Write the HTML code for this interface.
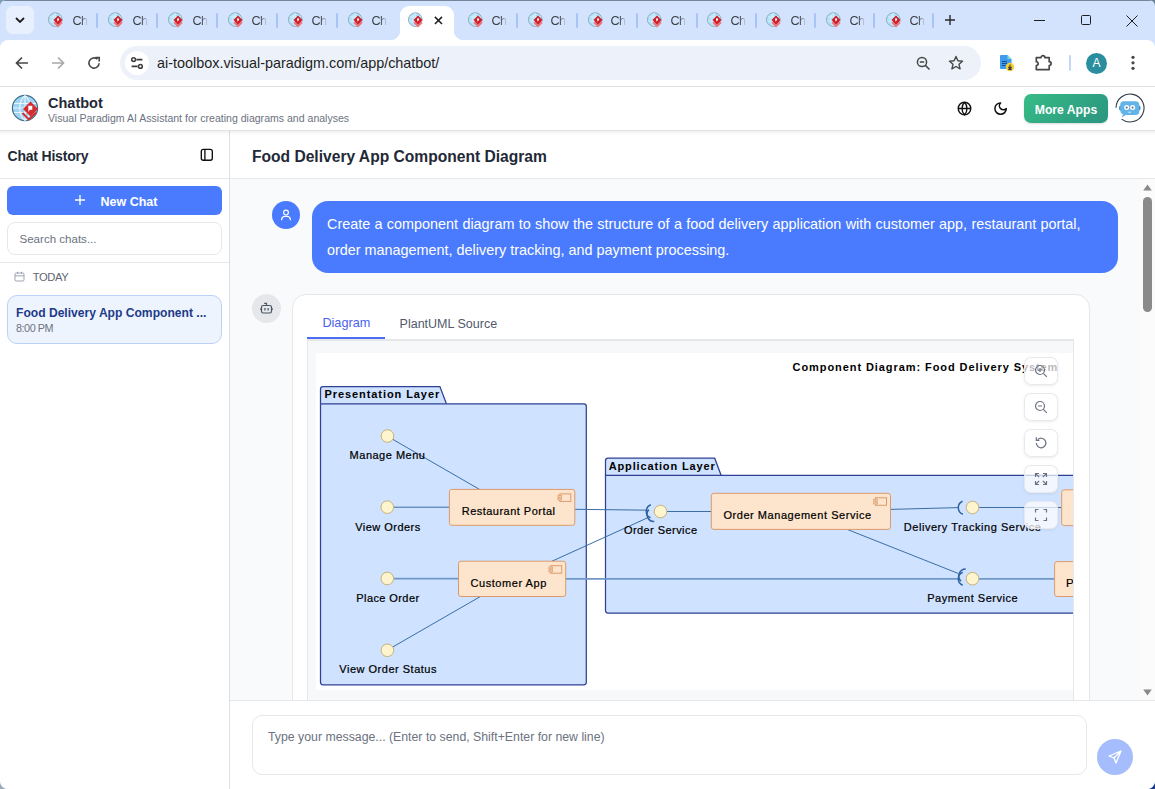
<!DOCTYPE html>
<html><head><meta charset="utf-8">
<style>
*{box-sizing:border-box;margin:0;padding:0}
html,body{width:1155px;height:789px;overflow:hidden;background:#6f8596;font-family:"Liberation Sans",sans-serif}
.abs{position:absolute}
#win{position:absolute;left:0;top:0;width:1155px;height:789px;background:#d3e3fd;border-radius:6px 6px 8px 8px;overflow:hidden}
.tab{position:absolute;top:12px;width:16px;height:16px}
.tabtxt{position:absolute;top:13.6px;font-size:12.6px;line-height:13px;color:#3c3f44;letter-spacing:-0.5px;margin-left:0.5px;-webkit-mask-image:linear-gradient(90deg,#000 55%,transparent 100%);width:15px;overflow:hidden}
.sep{position:absolute;top:12px;width:2px;height:15px;background:#a8c4f4;border-radius:1px}
#toolbar{position:absolute;left:0;top:40px;width:1155px;height:47px;background:#fff;border-radius:8px 8px 0 0;border-bottom:1px solid #e1e3e1}
#omni{position:absolute;left:120px;top:6px;width:861px;height:34px;border-radius:17px;background:#edf2fa}
#app{position:absolute;left:0;top:0;width:1155px;height:789px;pointer-events:none}
</style></head><body>
<div class="abs" style="left:0;top:0;width:12px;height:12px;background:#7c9db4"></div>
<div class="abs" style="left:1143px;top:0;width:12px;height:12px;background:#6a8294"></div>
<div class="abs" style="left:0;top:777px;width:12px;height:12px;background:#9aaabb"></div>
<div class="abs" style="left:1143px;top:777px;width:12px;height:12px;background:#1b3c8c"></div>
<div id="win">
  <div class="abs" style="left:0;top:0;width:1155px;height:1px;background:#74879a"></div>
  <div class="abs" style="left:0;top:1px;width:1155px;height:40px">
  <!-- tab strip -->
  <div class="abs" style="left:6px;top:5px;width:28px;height:28px;border-radius:7px;background:#e9f0fd"></div>
  <svg class="abs" style="left:14px;top:14px" width="12" height="10" viewBox="0 0 12 10"><path d="M2 3 L6 7 L10 3" fill="none" stroke="#1f1f1f" stroke-width="1.8"/></svg>
  <!-- active tab -->
  <div class="abs" style="left:400px;top:5px;width:54px;height:36px;background:#fff;border-radius:9px 9px 0 0"></div>
  <div class="abs" style="left:390px;top:29px;width:10px;height:11px;background:radial-gradient(circle at 0 0,#d3e3fd 10px,#fff 10.7px)"></div>
  <div class="abs" style="left:454px;top:29px;width:10px;height:11px;background:radial-gradient(circle at 100% 0,#d3e3fd 10px,#fff 10.7px)"></div>
  <div id="tabs">
<svg class="abs" style="left:48.3px;top:11px" width="16" height="16" viewBox="0 0 16 16"><circle cx="7.3" cy="7.6" r="6.8" fill="#b3e2fb" stroke="#8aa9bc" stroke-width="1"/><path d="M1.5 5 H13.5 M1 9 H14 M7.3 1 V14 M7.3 1 C4 4 4 11 7.3 14" fill="none" stroke="#dcf2fd" stroke-width="0.7"/><path d="M10 6.4 L14.6 11 L10 15.6 L5.4 11 Z" fill="#e8787f"/><path d="M10 3.6 L14.5 8.1 L10 12.6 L5.5 8.1 Z" fill="#cf1d28"/><path d="M9 6.7 C9 6 11 6 11.2 7 C11.3 7.8 10.5 8.4 9.8 9.7 C9.4 8.6 9 7.8 9 6.7 Z" fill="#fff"/></svg>
<div class="tabtxt" style="left:72px">Ch</div>
<div class="sep" style="left:96px"></div>
<svg class="abs" style="left:108.2px;top:11px" width="16" height="16" viewBox="0 0 16 16"><circle cx="7.3" cy="7.6" r="6.8" fill="#b3e2fb" stroke="#8aa9bc" stroke-width="1"/><path d="M1.5 5 H13.5 M1 9 H14 M7.3 1 V14 M7.3 1 C4 4 4 11 7.3 14" fill="none" stroke="#dcf2fd" stroke-width="0.7"/><path d="M10 6.4 L14.6 11 L10 15.6 L5.4 11 Z" fill="#e8787f"/><path d="M10 3.6 L14.5 8.1 L10 12.6 L5.5 8.1 Z" fill="#cf1d28"/><path d="M9 6.7 C9 6 11 6 11.2 7 C11.3 7.8 10.5 8.4 9.8 9.7 C9.4 8.6 9 7.8 9 6.7 Z" fill="#fff"/></svg>
<div class="tabtxt" style="left:132px">Ch</div>
<div class="sep" style="left:156px"></div>
<svg class="abs" style="left:168.1px;top:11px" width="16" height="16" viewBox="0 0 16 16"><circle cx="7.3" cy="7.6" r="6.8" fill="#b3e2fb" stroke="#8aa9bc" stroke-width="1"/><path d="M1.5 5 H13.5 M1 9 H14 M7.3 1 V14 M7.3 1 C4 4 4 11 7.3 14" fill="none" stroke="#dcf2fd" stroke-width="0.7"/><path d="M10 6.4 L14.6 11 L10 15.6 L5.4 11 Z" fill="#e8787f"/><path d="M10 3.6 L14.5 8.1 L10 12.6 L5.5 8.1 Z" fill="#cf1d28"/><path d="M9 6.7 C9 6 11 6 11.2 7 C11.3 7.8 10.5 8.4 9.8 9.7 C9.4 8.6 9 7.8 9 6.7 Z" fill="#fff"/></svg>
<div class="tabtxt" style="left:192px">Ch</div>
<div class="sep" style="left:216px"></div>
<svg class="abs" style="left:228.0px;top:11px" width="16" height="16" viewBox="0 0 16 16"><circle cx="7.3" cy="7.6" r="6.8" fill="#b3e2fb" stroke="#8aa9bc" stroke-width="1"/><path d="M1.5 5 H13.5 M1 9 H14 M7.3 1 V14 M7.3 1 C4 4 4 11 7.3 14" fill="none" stroke="#dcf2fd" stroke-width="0.7"/><path d="M10 6.4 L14.6 11 L10 15.6 L5.4 11 Z" fill="#e8787f"/><path d="M10 3.6 L14.5 8.1 L10 12.6 L5.5 8.1 Z" fill="#cf1d28"/><path d="M9 6.7 C9 6 11 6 11.2 7 C11.3 7.8 10.5 8.4 9.8 9.7 C9.4 8.6 9 7.8 9 6.7 Z" fill="#fff"/></svg>
<div class="tabtxt" style="left:251px">Ch</div>
<div class="sep" style="left:276px"></div>
<svg class="abs" style="left:287.9px;top:11px" width="16" height="16" viewBox="0 0 16 16"><circle cx="7.3" cy="7.6" r="6.8" fill="#b3e2fb" stroke="#8aa9bc" stroke-width="1"/><path d="M1.5 5 H13.5 M1 9 H14 M7.3 1 V14 M7.3 1 C4 4 4 11 7.3 14" fill="none" stroke="#dcf2fd" stroke-width="0.7"/><path d="M10 6.4 L14.6 11 L10 15.6 L5.4 11 Z" fill="#e8787f"/><path d="M10 3.6 L14.5 8.1 L10 12.6 L5.5 8.1 Z" fill="#cf1d28"/><path d="M9 6.7 C9 6 11 6 11.2 7 C11.3 7.8 10.5 8.4 9.8 9.7 C9.4 8.6 9 7.8 9 6.7 Z" fill="#fff"/></svg>
<div class="tabtxt" style="left:311px">Ch</div>
<div class="sep" style="left:336px"></div>
<svg class="abs" style="left:347.8px;top:11px" width="16" height="16" viewBox="0 0 16 16"><circle cx="7.3" cy="7.6" r="6.8" fill="#b3e2fb" stroke="#8aa9bc" stroke-width="1"/><path d="M1.5 5 H13.5 M1 9 H14 M7.3 1 V14 M7.3 1 C4 4 4 11 7.3 14" fill="none" stroke="#dcf2fd" stroke-width="0.7"/><path d="M10 6.4 L14.6 11 L10 15.6 L5.4 11 Z" fill="#e8787f"/><path d="M10 3.6 L14.5 8.1 L10 12.6 L5.5 8.1 Z" fill="#cf1d28"/><path d="M9 6.7 C9 6 11 6 11.2 7 C11.3 7.8 10.5 8.4 9.8 9.7 C9.4 8.6 9 7.8 9 6.7 Z" fill="#fff"/></svg>
<div class="tabtxt" style="left:371px">Ch</div>
<svg class="abs" style="left:408.3px;top:11px" width="16" height="16" viewBox="0 0 16 16"><circle cx="7.3" cy="7.6" r="6.8" fill="#b3e2fb" stroke="#8aa9bc" stroke-width="1"/><path d="M1.5 5 H13.5 M1 9 H14 M7.3 1 V14 M7.3 1 C4 4 4 11 7.3 14" fill="none" stroke="#dcf2fd" stroke-width="0.7"/><path d="M10 6.4 L14.6 11 L10 15.6 L5.4 11 Z" fill="#e8787f"/><path d="M10 3.6 L14.5 8.1 L10 12.6 L5.5 8.1 Z" fill="#cf1d28"/><path d="M9 6.7 C9 6 11 6 11.2 7 C11.3 7.8 10.5 8.4 9.8 9.7 C9.4 8.6 9 7.8 9 6.7 Z" fill="#fff"/></svg>
<svg class="abs" style="left:468.3px;top:11px" width="16" height="16" viewBox="0 0 16 16"><circle cx="7.3" cy="7.6" r="6.8" fill="#b3e2fb" stroke="#8aa9bc" stroke-width="1"/><path d="M1.5 5 H13.5 M1 9 H14 M7.3 1 V14 M7.3 1 C4 4 4 11 7.3 14" fill="none" stroke="#dcf2fd" stroke-width="0.7"/><path d="M10 6.4 L14.6 11 L10 15.6 L5.4 11 Z" fill="#e8787f"/><path d="M10 3.6 L14.5 8.1 L10 12.6 L5.5 8.1 Z" fill="#cf1d28"/><path d="M9 6.7 C9 6 11 6 11.2 7 C11.3 7.8 10.5 8.4 9.8 9.7 C9.4 8.6 9 7.8 9 6.7 Z" fill="#fff"/></svg>
<div class="tabtxt" style="left:491px">Ch</div>
<div class="sep" style="left:516px"></div>
<svg class="abs" style="left:527.9px;top:11px" width="16" height="16" viewBox="0 0 16 16"><circle cx="7.3" cy="7.6" r="6.8" fill="#b3e2fb" stroke="#8aa9bc" stroke-width="1"/><path d="M1.5 5 H13.5 M1 9 H14 M7.3 1 V14 M7.3 1 C4 4 4 11 7.3 14" fill="none" stroke="#dcf2fd" stroke-width="0.7"/><path d="M10 6.4 L14.6 11 L10 15.6 L5.4 11 Z" fill="#e8787f"/><path d="M10 3.6 L14.5 8.1 L10 12.6 L5.5 8.1 Z" fill="#cf1d28"/><path d="M9 6.7 C9 6 11 6 11.2 7 C11.3 7.8 10.5 8.4 9.8 9.7 C9.4 8.6 9 7.8 9 6.7 Z" fill="#fff"/></svg>
<div class="tabtxt" style="left:550px">Ch</div>
<div class="sep" style="left:576px"></div>
<svg class="abs" style="left:587.5px;top:11px" width="16" height="16" viewBox="0 0 16 16"><circle cx="7.3" cy="7.6" r="6.8" fill="#b3e2fb" stroke="#8aa9bc" stroke-width="1"/><path d="M1.5 5 H13.5 M1 9 H14 M7.3 1 V14 M7.3 1 C4 4 4 11 7.3 14" fill="none" stroke="#dcf2fd" stroke-width="0.7"/><path d="M10 6.4 L14.6 11 L10 15.6 L5.4 11 Z" fill="#e8787f"/><path d="M10 3.6 L14.5 8.1 L10 12.6 L5.5 8.1 Z" fill="#cf1d28"/><path d="M9 6.7 C9 6 11 6 11.2 7 C11.3 7.8 10.5 8.4 9.8 9.7 C9.4 8.6 9 7.8 9 6.7 Z" fill="#fff"/></svg>
<div class="tabtxt" style="left:610px">Ch</div>
<div class="sep" style="left:636px"></div>
<svg class="abs" style="left:647.1px;top:11px" width="16" height="16" viewBox="0 0 16 16"><circle cx="7.3" cy="7.6" r="6.8" fill="#b3e2fb" stroke="#8aa9bc" stroke-width="1"/><path d="M1.5 5 H13.5 M1 9 H14 M7.3 1 V14 M7.3 1 C4 4 4 11 7.3 14" fill="none" stroke="#dcf2fd" stroke-width="0.7"/><path d="M10 6.4 L14.6 11 L10 15.6 L5.4 11 Z" fill="#e8787f"/><path d="M10 3.6 L14.5 8.1 L10 12.6 L5.5 8.1 Z" fill="#cf1d28"/><path d="M9 6.7 C9 6 11 6 11.2 7 C11.3 7.8 10.5 8.4 9.8 9.7 C9.4 8.6 9 7.8 9 6.7 Z" fill="#fff"/></svg>
<div class="tabtxt" style="left:670px">Ch</div>
<div class="sep" style="left:695.5px"></div>
<svg class="abs" style="left:706.7px;top:11px" width="16" height="16" viewBox="0 0 16 16"><circle cx="7.3" cy="7.6" r="6.8" fill="#b3e2fb" stroke="#8aa9bc" stroke-width="1"/><path d="M1.5 5 H13.5 M1 9 H14 M7.3 1 V14 M7.3 1 C4 4 4 11 7.3 14" fill="none" stroke="#dcf2fd" stroke-width="0.7"/><path d="M10 6.4 L14.6 11 L10 15.6 L5.4 11 Z" fill="#e8787f"/><path d="M10 3.6 L14.5 8.1 L10 12.6 L5.5 8.1 Z" fill="#cf1d28"/><path d="M9 6.7 C9 6 11 6 11.2 7 C11.3 7.8 10.5 8.4 9.8 9.7 C9.4 8.6 9 7.8 9 6.7 Z" fill="#fff"/></svg>
<div class="tabtxt" style="left:730px">Ch</div>
<div class="sep" style="left:755px"></div>
<svg class="abs" style="left:766.3px;top:11px" width="16" height="16" viewBox="0 0 16 16"><circle cx="7.3" cy="7.6" r="6.8" fill="#b3e2fb" stroke="#8aa9bc" stroke-width="1"/><path d="M1.5 5 H13.5 M1 9 H14 M7.3 1 V14 M7.3 1 C4 4 4 11 7.3 14" fill="none" stroke="#dcf2fd" stroke-width="0.7"/><path d="M10 6.4 L14.6 11 L10 15.6 L5.4 11 Z" fill="#e8787f"/><path d="M10 3.6 L14.5 8.1 L10 12.6 L5.5 8.1 Z" fill="#cf1d28"/><path d="M9 6.7 C9 6 11 6 11.2 7 C11.3 7.8 10.5 8.4 9.8 9.7 C9.4 8.6 9 7.8 9 6.7 Z" fill="#fff"/></svg>
<div class="tabtxt" style="left:790px">Ch</div>
<div class="sep" style="left:814px"></div>
<svg class="abs" style="left:825.9px;top:11px" width="16" height="16" viewBox="0 0 16 16"><circle cx="7.3" cy="7.6" r="6.8" fill="#b3e2fb" stroke="#8aa9bc" stroke-width="1"/><path d="M1.5 5 H13.5 M1 9 H14 M7.3 1 V14 M7.3 1 C4 4 4 11 7.3 14" fill="none" stroke="#dcf2fd" stroke-width="0.7"/><path d="M10 6.4 L14.6 11 L10 15.6 L5.4 11 Z" fill="#e8787f"/><path d="M10 3.6 L14.5 8.1 L10 12.6 L5.5 8.1 Z" fill="#cf1d28"/><path d="M9 6.7 C9 6 11 6 11.2 7 C11.3 7.8 10.5 8.4 9.8 9.7 C9.4 8.6 9 7.8 9 6.7 Z" fill="#fff"/></svg>
<div class="tabtxt" style="left:849px">Ch</div>
<div class="sep" style="left:873px"></div>
<svg class="abs" style="left:885.5px;top:11px" width="16" height="16" viewBox="0 0 16 16"><circle cx="7.3" cy="7.6" r="6.8" fill="#b3e2fb" stroke="#8aa9bc" stroke-width="1"/><path d="M1.5 5 H13.5 M1 9 H14 M7.3 1 V14 M7.3 1 C4 4 4 11 7.3 14" fill="none" stroke="#dcf2fd" stroke-width="0.7"/><path d="M10 6.4 L14.6 11 L10 15.6 L5.4 11 Z" fill="#e8787f"/><path d="M10 3.6 L14.5 8.1 L10 12.6 L5.5 8.1 Z" fill="#cf1d28"/><path d="M9 6.7 C9 6 11 6 11.2 7 C11.3 7.8 10.5 8.4 9.8 9.7 C9.4 8.6 9 7.8 9 6.7 Z" fill="#fff"/></svg>
<div class="tabtxt" style="left:909px">Ch</div>
<div class="sep" style="left:932px"></div>
</div>
  <svg class="abs" style="left:433.6px;top:15.3px" width="9" height="9" viewBox="0 0 9 9"><path d="M0.9 0.9 L8 8 M8 0.9 L0.9 8" stroke="#1f1f1f" stroke-width="1.5"/></svg>
  <!-- new tab plus -->
  <svg class="abs" style="left:944px;top:12.5px" width="12" height="12" viewBox="0 0 12 12"><path d="M6 1 V11 M1 6 H11" stroke="#2a2a2a" stroke-width="1.4"/></svg>
  <!-- window controls -->
  <div class="abs" style="left:1034px;top:19px;width:11px;height:1px;background:#1f1f1f"></div>
  <div class="abs" style="left:1081px;top:14px;width:10px;height:10px;border:1.2px solid #1f1f1f;border-radius:1.5px"></div>
  <svg class="abs" style="left:1126px;top:14px" width="12" height="12" viewBox="0 0 12 12"><path d="M0.5 0.5 L11.5 11.5 M11.5 0.5 L0.5 11.5" stroke="#1f1f1f" stroke-width="1"/></svg>

  </div>
  <div id="toolbar">
    <!-- back -->
    <svg class="abs" style="left:14px;top:15px" width="16" height="16" viewBox="0 0 16 16"><path d="M14 8 H2.5 M8 2.5 L2.5 8 L8 13.5" fill="none" stroke="#474747" stroke-width="1.7"/></svg>
    <svg class="abs" style="left:50px;top:15px" width="16" height="16" viewBox="0 0 16 16"><path d="M2 8 H13.5 M8 2.5 L13.5 8 L8 13.5" fill="none" stroke="#a9a9a9" stroke-width="1.7"/></svg>
    <svg class="abs" style="left:87px;top:16px" width="14" height="14" viewBox="0 0 14 14"><path d="M12.1 7.2 A5.1 5.1 0 1 1 10.4 3.2" fill="none" stroke="#474747" stroke-width="1.6"/><path d="M8.3 1.6 H12.2 V5.5" fill="none" stroke="#474747" stroke-width="1.6"/></svg>
    <div id="omni">
      <div class="abs" style="left:5px;top:5px;width:24px;height:24px;border-radius:12px;background:#fff"></div>
      <svg class="abs" style="left:10px;top:10px" width="14" height="14" viewBox="0 0 14 14"><circle cx="3.6" cy="3.6" r="1.9" fill="none" stroke="#3c3c3c" stroke-width="1.5"/><path d="M6.4 3.6 H12.4" stroke="#3c3c3c" stroke-width="1.6"/><circle cx="10.4" cy="10.4" r="1.9" fill="none" stroke="#3c3c3c" stroke-width="1.5"/><path d="M1.6 10.4 H7.6" stroke="#3c3c3c" stroke-width="1.6"/></svg>
      <div class="abs" style="left:37px;top:9px;font-size:14.4px;color:#1f1f1f;white-space:nowrap">ai-toolbox.visual-paradigm.com/app/chatbot/</div>
      <svg class="abs" style="left:796px;top:10px" width="15" height="15" viewBox="0 0 15 15"><circle cx="6" cy="6" r="4.6" fill="none" stroke="#474747" stroke-width="1.5"/><path d="M3.8 6 H8.2 M9.4 9.4 L13.5 13.5" stroke="#474747" stroke-width="1.5"/></svg>
      <svg class="abs" style="left:828px;top:9px" width="16" height="16" viewBox="0 0 16 16"><path d="M8 1.5 L9.9 5.8 L14.5 6.2 L11 9.3 L12.1 13.9 L8 11.5 L3.9 13.9 L5 9.3 L1.5 6.2 L6.1 5.8 Z" fill="none" stroke="#474747" stroke-width="1.4" stroke-linejoin="round"/></svg>
    </div>
    <!-- doc icon -->
    <svg class="abs" style="left:998px;top:14px" width="18" height="18" viewBox="0 0 18 18"><path d="M3 1 H9.5 L13.5 5 V14 Q13.5 15 12.5 15 H3 Q2 15 2 14 V2 Q2 1 3 1 Z" fill="#3d9cf0"/><path d="M9.5 1 L13.5 5 H9.5 Z" fill="#7fe0d0"/><path d="M4 7.5 H9 M4 9.5 H9 M4 11.5 H7.5" stroke="#1b4f8a" stroke-width="1"/><circle cx="12" cy="13" r="4.2" fill="#f7d038"/><path d="M12 10.6 V14.6 M10.3 12.9 L12 14.6 L13.7 12.9 M10.2 15.4 H13.8" fill="none" stroke="#3a3a2a" stroke-width="1.1"/></svg>
    <!-- puzzle -->
    <svg class="abs" style="left:1034px;top:13px" width="20" height="19" viewBox="0 0 20 19"><path d="M2.3 4.6 H7 A1.9 1.9 0 0 1 10.8 4.6 H15.2 V8.7 A1.9 1.9 0 0 1 15.2 12.5 V16.6 H2.3 V12.5 A1.9 1.9 0 0 0 2.3 8.7 Z" fill="none" stroke="#474747" stroke-width="1.7" stroke-linejoin="round"/></svg>
    <div class="abs" style="left:1069px;top:15px;width:2px;height:16px;background:#c5d6f7;border-radius:1px"></div>
    <div class="abs" style="left:1086px;top:13px;width:21px;height:21px;border-radius:50%;background:#2a8e9e;color:#fff;font-size:12px;text-align:center;line-height:21px">A</div>
    <svg class="abs" style="left:1130px;top:14px" width="6" height="18" viewBox="0 0 6 18"><circle cx="3" cy="3.3" r="1.6" fill="#474747"/><circle cx="3" cy="8.8" r="1.6" fill="#474747"/><circle cx="3" cy="14.3" r="1.6" fill="#474747"/></svg>
  </div>

  <div id="app">
  <!-- header -->
  <div class="abs" style="left:0;top:87px;width:1155px;height:44px;background:#fff;border-bottom:1px solid #e1e3e7"></div>
  <svg class="abs" style="left:11px;top:93.7px" width="28" height="28" viewBox="0 0 28 28">
    <circle cx="14" cy="14" r="12.6" fill="#9fd3f3" stroke="#3f6f86" stroke-width="1.2"/>
    <path d="M3 9.5 H25 M2 14 H26 M3 18.5 H25 M14 1.5 V26.5 M14 1.5 C7 7 7 21 14 26.5 M14 1.5 C21 7 21 21 14 26.5" fill="none" stroke="#e8f6fd" stroke-width="1.1"/>
    <path d="M19.5 7.5 L27 15 L19.5 22.5 L12 15 Z" fill="#d52a2f"/>
    <path d="M17.3 11.8 L21.3 11.8 L21.3 15.8 L18.9 15.8 L17.3 18 Z" fill="#fff"/>
    <path d="M11.5 19 L17.8 25.5 L25 18.5" fill="none" stroke="#d52a2f" stroke-width="1.8"/>
  </svg>
  <div class="abs" style="left:48px;top:96.2px;font-size:14.5px;line-height:14.5px;font-weight:bold;color:#1f2937;white-space:nowrap">Chatbot</div>
  <div class="abs" style="left:48px;top:112.5px;font-size:10.55px;line-height:10.55px;color:#6b7280;white-space:nowrap">Visual Paradigm AI Assistant for creating diagrams and analyses</div>
  <!-- globe -->
  <svg class="abs" style="left:957px;top:100.8px" width="15" height="15" viewBox="0 0 24 24"><circle cx="12" cy="12" r="10" fill="none" stroke="#111" stroke-width="2.35"/><path d="M12 2a14.5 14.5 0 0 0 0 20 14.5 14.5 0 0 0 0-20 M2 12h20" fill="none" stroke="#111" stroke-width="2.2"/></svg>
  <!-- moon -->
  <svg class="abs" style="left:993px;top:100.5px" width="15.2" height="15.2" viewBox="0 0 24 24"><path d="M12 3a6 6 0 0 0 9 9 9 9 0 1 1-9-9Z" fill="none" stroke="#111" stroke-width="2.4" stroke-linejoin="round"/></svg>
  <div class="abs" style="left:1024px;top:94px;width:84px;height:29px;border-radius:7px;background:linear-gradient(135deg,#38bb86,#2a9580);box-shadow:0 1px 2px rgba(0,0,0,0.15);color:#fff;font-weight:bold;font-size:12.2px;line-height:32px;text-align:center;white-space:nowrap">More Apps</div>
  <svg class="abs" style="left:1114.6px;top:93.3px" width="30" height="30" viewBox="0 0 30 30">
    <path d="M1,14.76 A14,14 0 1 1 6.57,26.18" fill="none" stroke="#2f3a4a" stroke-width="1.1"/>
    <ellipse cx="5.6" cy="15" rx="1.6" ry="2.6" fill="#3f86c2"/><ellipse cx="24" cy="15" rx="1.6" ry="2.6" fill="#3f86c2"/>
    <path d="M9 8.2 H20.5 Q24.3 8.2 24.3 12 V18.3 Q24.3 22.1 20.5 22.1 H11 L6.5 24.4 L8 21.4 Q5.2 20.3 5.2 17.5 V12 Q5.2 8.2 9 8.2 Z" fill="#62b4e9"/>
    <circle cx="11.7" cy="14.4" r="2.5" fill="#fff"/><circle cx="17.6" cy="14.4" r="2.5" fill="#fff"/>
    <circle cx="11.7" cy="14.6" r="1.1" fill="#6b7a88"/><circle cx="17.6" cy="14.6" r="1.1" fill="#6b7a88"/>
    <ellipse cx="14.6" cy="19.2" rx="1.6" ry="0.8" fill="#bfe3f8"/>
  </svg>

  <!-- sidebar -->
  <div class="abs" style="left:0;top:131px;width:230px;height:658px;background:#fff;border-right:1px solid #dcdfe3"></div>
  <div class="abs" style="left:0;top:178px;width:229px;height:1px;background:#e5e7eb"></div>
  <div class="abs" style="left:7.5px;top:148.6px;font-size:14px;line-height:14px;letter-spacing:-0.2px;font-weight:bold;color:#1f2937;white-space:nowrap">Chat History</div>
  <svg class="abs" style="left:199.5px;top:147.5px" width="14" height="14" viewBox="0 0 14 14"><rect x="1.3" y="1.4" width="11" height="10.8" rx="2" fill="none" stroke="#111" stroke-width="1.35"/><path d="M4.9 1.4 V12.2" stroke="#111" stroke-width="1.35"/></svg>
  <div class="abs" style="left:7px;top:186px;width:215px;height:29px;border-radius:6px;background:#4a7bfe"></div>
  <svg class="abs" style="left:74px;top:194px" width="12" height="12" viewBox="0 0 12 12"><path d="M6 1 V11 M1 6 H11" stroke="#fff" stroke-width="1.3"/></svg>
  <div class="abs" style="left:100.5px;top:196.2px;font-size:12.5px;line-height:12.5px;font-weight:bold;color:#fff;white-space:nowrap">New Chat</div>
  <div class="abs" style="left:7px;top:222px;width:215px;height:33px;border-radius:8px;background:#fff;border:1px solid #e5e7eb"></div>
  <div class="abs" style="left:19.5px;top:234.1px;font-size:11.55px;line-height:11.55px;color:#6b7280;white-space:nowrap">Search chats...</div>
  <div class="abs" style="left:0;top:262px;width:229px;height:1px;background:#e5e7eb"></div>
  <svg class="abs" style="left:14px;top:271px" width="11" height="11" viewBox="0 0 11 11"><rect x="1" y="2" width="9" height="8" rx="1.2" fill="none" stroke="#9ca3af" stroke-width="1"/><path d="M1 4.8 H10 M3.5 0.8 V3 M7.5 0.8 V3" stroke="#9ca3af" stroke-width="1"/></svg>
  <div class="abs" style="left:32.8px;top:272.2px;font-size:11.2px;line-height:11.2px;letter-spacing:-0.4px;color:#5f6672;white-space:nowrap">TODAY</div>
  <div class="abs" style="left:7px;top:295px;width:215px;height:49px;border-radius:10px;background:#eef4fe;border:1px solid #bcd0fa"></div>
  <div class="abs" style="left:16px;top:306.6px;font-size:12.1px;line-height:12.1px;font-weight:bold;color:#1e3a8a;white-space:nowrap">Food Delivery App Component ...</div>
  <div class="abs" style="left:16px;top:322.8px;font-size:10.8px;line-height:10.8px;letter-spacing:-0.45px;color:#6b7280;white-space:nowrap">8:00 PM</div>

  <!-- main header -->
  <div class="abs" style="left:230px;top:131px;width:925px;height:48px;background:#fff;border-bottom:1px solid #e5e7eb"></div>
  <div class="abs" style="left:252px;top:149px;font-size:15.6px;line-height:15.6px;font-weight:bold;color:#1f2937;white-space:nowrap">Food Delivery App Component Diagram</div>

  <div class="abs" style="left:0;top:131px;width:1155px;height:4px;background:linear-gradient(rgba(0,0,0,0.06),rgba(0,0,0,0))"></div>
  <!-- chat area -->
  <div class="abs" style="left:230px;top:179px;width:925px;height:521px;background:#f9fafb;overflow:hidden">
    <div class="abs" style="left:42px;top:22px;width:28px;height:28px;border-radius:50%;background:#4a7bfe"></div>
    <svg class="abs" style="left:49px;top:29px" width="14" height="14" viewBox="0 0 14 14"><circle cx="7" cy="4.6" r="2.4" fill="none" stroke="#fff" stroke-width="1.2"/><path d="M2.6 12.2 V11.4 A3.4 3.4 0 0 1 6 8.4 H8 A3.4 3.4 0 0 1 11.4 11.4 V12.2" fill="none" stroke="#fff" stroke-width="1.2"/></svg>
    <div class="abs" style="left:82px;top:22px;width:806px;height:72px;border-radius:16px;background:#4a7bfe"></div>
    <div class="abs" style="left:97px;top:33px;width:780px;font-size:14.4px;line-height:25.6px;color:#fff;white-space:nowrap"><span style="word-spacing:0.33px">Create a component diagram to show the structure of a food delivery application with customer app, restaurant portal,</span><br><span style="word-spacing:0px">order management, delivery tracking, and payment processing.</span></div>
    <div class="abs" style="left:22px;top:115px;width:29px;height:29px;border-radius:50%;background:#e5e7eb"></div>
    <svg class="abs" style="left:29px;top:122px" width="15" height="15" viewBox="0 0 15 15"><rect x="2.5" y="4.5" width="10" height="7.5" rx="1.8" fill="none" stroke="#4b5563" stroke-width="1.2"/><path d="M7.5 4.5 V2.4 H5.2 M1 8.2 H2.5 M12.5 8.2 H14 M5.9 6.9 V9.4 M9.1 6.9 V9.4" fill="none" stroke="#4b5563" stroke-width="1.2"/></svg>
    <div class="abs" style="left:62px;top:115px;width:798px;height:700px;border-radius:14px;background:#fff;border:1px solid #e5e7eb"></div>
    <div class="abs" style="left:92.4px;top:138.2px;font-size:12.7px;line-height:12.7px;color:#4a62ee;white-space:nowrap">Diagram</div>
    <div class="abs" style="left:169.6px;top:138.8px;font-size:12.5px;line-height:12.5px;color:#505a6b;white-space:nowrap">PlantUML Source</div>
    <div class="abs" style="left:77px;top:160px;width:767px;height:600px;background:#f7f8fa;border:1px solid #e5e7eb;border-top-width:2px"></div>
    <div class="abs" style="left:77px;top:158px;width:78px;height:2px;background:#4c6ef5"></div>
    <div class="abs" style="left:86px;top:174px;width:757px;height:337px;background:#fff;overflow:hidden"><svg width="757" height="337" viewBox="316 353 757 337" style="position:absolute;left:0;top:0;font-family:'Liberation Sans',sans-serif"><text x="792.6" y="370.6" font-size="11" font-weight="bold" fill="#000" textLength="264.8" lengthAdjust="spacing">Component Diagram: Food Delivery System</text><path d="M320.5,403.8 V389.0 Q320.5,386.5 323.0,386.5 H439.9 L446.4,403.8" fill="#cfe2ff" stroke="#2e3f94" stroke-width="1.25"/><path d="M320.5,403.8 H583.8 Q586.3,403.8 586.3,406.3 V682.3 Q586.3,684.8 583.8,684.8 H323.0 Q320.5,684.8 320.5,682.3 Z" fill="#cfe2ff" stroke="#2e3f94" stroke-width="1.25"/><text x="324.5" y="398.1" font-size="11" font-weight="bold" fill="#000" textLength="114.7" lengthAdjust="spacing">Presentation Layer</text><path d="M605.5,475.3 V460.7 Q605.5,458.2 608.0,458.2 H714.7 L721.1,475.3" fill="#cfe2ff" stroke="#2e3f94" stroke-width="1.25"/><path d="M605.5,475.3 H1197.5 Q1200,475.3 1200,477.8 V610.5 Q1200,613 1197.5,613 H608.0 Q605.5,613 605.5,610.5 Z" fill="#cfe2ff" stroke="#2e3f94" stroke-width="1.25"/><text x="608.7" y="469.6" font-size="11" font-weight="bold" fill="#000" textLength="106" lengthAdjust="spacing">Application Layer</text><line x1="392.5" y1="439.2" x2="479.5" y2="489.4" stroke="#3b6ea5" stroke-width="1" opacity="1"/><line x1="393.6" y1="507.2" x2="449.4" y2="507.2" stroke="#3b6ea5" stroke-width="1" opacity="1"/><line x1="574.8" y1="509.3" x2="649" y2="510.2" stroke="#3b6ea5" stroke-width="1" opacity="1"/><line x1="393.6" y1="578.6" x2="458.5" y2="578.6" stroke="#6f98c9" stroke-width="1.8" opacity="1"/><line x1="392.7" y1="647" x2="480.4" y2="596.5" stroke="#3b6ea5" stroke-width="1" opacity="1"/><line x1="552" y1="561.2" x2="647.6" y2="517.8" stroke="#3b6ea5" stroke-width="1" opacity="1"/><line x1="565.7" y1="578.8" x2="958.3" y2="578.8" stroke="#6f98c9" stroke-width="1.8" opacity="1"/><line x1="666.8" y1="511.5" x2="711.3" y2="511.5" stroke="#3b6ea5" stroke-width="1" opacity="1"/><line x1="890.5" y1="509.4" x2="958.3" y2="507.6" stroke="#3b6ea5" stroke-width="1" opacity="1"/><line x1="847.2" y1="529.4" x2="958.6" y2="573.6" stroke="#3b6ea5" stroke-width="1" opacity="1"/><line x1="978.8" y1="507.5" x2="1061.7" y2="507.5" stroke="#3b6ea5" stroke-width="1" opacity="1"/><line x1="978.8" y1="578.8" x2="1054.6" y2="578.8" stroke="#6f98c9" stroke-width="1.8" opacity="1"/><circle cx="387.5" cy="436" r="6.3" fill="#fef4cd" stroke="#c6b27c" stroke-width="1"/><text x="349.6" y="458.8" font-size="11" fill="#000" stroke="#000" stroke-width="0.22" textLength="75.3" lengthAdjust="spacing">Manage Menu</text><circle cx="387.3" cy="507.2" r="6.3" fill="#fef4cd" stroke="#c6b27c" stroke-width="1"/><text x="355.2" y="531.1" font-size="11" fill="#000" stroke="#000" stroke-width="0.22" textLength="65" lengthAdjust="spacing">View Orders</text><circle cx="387.3" cy="578.5" r="6.3" fill="#fef4cd" stroke="#c6b27c" stroke-width="1"/><text x="356.3" y="602.1" font-size="11" fill="#000" stroke="#000" stroke-width="0.22" textLength="62.8" lengthAdjust="spacing">Place Order</text><circle cx="387.4" cy="650.3" r="6.3" fill="#fef4cd" stroke="#c6b27c" stroke-width="1"/><text x="339.3" y="672.7" font-size="11" fill="#000" stroke="#000" stroke-width="0.22" textLength="97.2" lengthAdjust="spacing">View Order Status</text><circle cx="660.5" cy="511.5" r="6.3" fill="#fef4cd" stroke="#c6b27c" stroke-width="1"/><text x="623.9" y="533.6" font-size="11" fill="#000" stroke="#000" stroke-width="0.22" textLength="73.1" lengthAdjust="spacing">Order Service</text><circle cx="972.5" cy="507.5" r="6.3" fill="#fef4cd" stroke="#c6b27c" stroke-width="1"/><text x="903.8" y="531.1" font-size="11" fill="#000" stroke="#000" stroke-width="0.22" textLength="137" lengthAdjust="spacing">Delivery Tracking Service</text><circle cx="972.5" cy="578.7" r="6.3" fill="#fef4cd" stroke="#c6b27c" stroke-width="1"/><text x="927.2" y="601.5" font-size="11" fill="#000" stroke="#000" stroke-width="0.22" textLength="90.5" lengthAdjust="spacing">Payment Service</text><path d="M650.51,517.74 A7,7 0 0 1 650.85,504.76" fill="none" stroke="#2f62a0" stroke-width="1.5"/><path d="M654.27,521.49 A7,7 0 0 1 648.87,509.69" fill="none" stroke="#2f62a0" stroke-width="1.5"/><path d="M962.83,514.22 A7,7 0 0 1 962.53,501.24" fill="none" stroke="#2f62a0" stroke-width="1.5"/><path d="M962.68,585.19 A7,7 0 0 1 962.68,572.21" fill="none" stroke="#2f62a0" stroke-width="1.5"/><path d="M960.98,581.14 A7,7 0 0 1 965.74,569.06" fill="none" stroke="#2f62a0" stroke-width="1.5"/><rect x="449.4" y="489.4" width="125.4" height="35.9" rx="2.5" fill="#fde5cd" stroke="#dc9a6c" stroke-width="1"/><rect x="559.8" y="493.9" width="11" height="7.5" fill="#fde5cd" stroke="#dc9a6c" stroke-width="1"/><rect x="558.0" y="495.29999999999995" width="3.6" height="1.8" fill="#fde5cd" stroke="#dc9a6c" stroke-width="0.8"/><rect x="558.0" y="498.2" width="3.6" height="1.8" fill="#fde5cd" stroke="#dc9a6c" stroke-width="0.8"/><text x="461.7" y="514.6" font-size="11" fill="#000" stroke="#000" stroke-width="0.22" textLength="93.3" lengthAdjust="spacing">Restaurant Portal</text><rect x="458.5" y="561.2" width="107.2" height="35.3" rx="2.5" fill="#fde5cd" stroke="#dc9a6c" stroke-width="1"/><rect x="550.7" y="565.7" width="11" height="7.5" fill="#fde5cd" stroke="#dc9a6c" stroke-width="1"/><rect x="548.9000000000001" y="567.1" width="3.6" height="1.8" fill="#fde5cd" stroke="#dc9a6c" stroke-width="0.8"/><rect x="548.9000000000001" y="570.0" width="3.6" height="1.8" fill="#fde5cd" stroke="#dc9a6c" stroke-width="0.8"/><text x="470.5" y="586.8" font-size="11" fill="#000" stroke="#000" stroke-width="0.22" textLength="75.8" lengthAdjust="spacing">Customer App</text><rect x="711.3" y="493.3" width="179.2" height="36.1" rx="2.5" fill="#fde5cd" stroke="#dc9a6c" stroke-width="1"/><rect x="875.5" y="497.8" width="11" height="7.5" fill="#fde5cd" stroke="#dc9a6c" stroke-width="1"/><rect x="873.7" y="499.2" width="3.6" height="1.8" fill="#fde5cd" stroke="#dc9a6c" stroke-width="0.8"/><rect x="873.7" y="502.1" width="3.6" height="1.8" fill="#fde5cd" stroke="#dc9a6c" stroke-width="0.8"/><text x="723.4" y="519" font-size="11" fill="#000" stroke="#000" stroke-width="0.22" textLength="147.7" lengthAdjust="spacing">Order Management Service</text><rect x="1061.7" y="489.8" width="150" height="35.8" rx="2.5" fill="#fde5cd" stroke="#dc9a6c" stroke-width="1"/><rect x="1054.6" y="561.6" width="150" height="34.9" rx="2.5" fill="#fde5cd" stroke="#dc9a6c" stroke-width="1"/><text x="1066" y="586.5" font-size="11.5" fill="#000" stroke="#000" stroke-width="0.22" textLength="8.5" lengthAdjust="spacing">P</text></svg></div>
    <div class="abs" style="left:794.4px;top:178px;width:34px;height:28px;border-radius:7px;background:rgba(255,255,255,0.72);border:1px solid rgba(229,231,235,0.9);box-shadow:0 1px 3px rgba(0,0,0,0.08)"></div>
    <svg class="abs" style="left:804.4px;top:185px" width="14" height="14" viewBox="0 0 14 14"><circle cx="6" cy="6" r="4.5" fill="none" stroke="#6b7280" stroke-width="1.2"/><path d="M9.3 9.3 L12.8 12.8 M4 6 H8 M6 4 V8" stroke="#6b7280" stroke-width="1.2"/></svg>
    <div class="abs" style="left:794.4px;top:214px;width:34px;height:28px;border-radius:7px;background:rgba(255,255,255,0.72);border:1px solid rgba(229,231,235,0.9);box-shadow:0 1px 3px rgba(0,0,0,0.08)"></div>
    <svg class="abs" style="left:804.4px;top:221px" width="14" height="14" viewBox="0 0 14 14"><circle cx="6" cy="6" r="4.5" fill="none" stroke="#6b7280" stroke-width="1.2"/><path d="M9.3 9.3 L12.8 12.8 M4 6 H8" stroke="#6b7280" stroke-width="1.2"/></svg>
    <div class="abs" style="left:794.4px;top:250px;width:34px;height:28px;border-radius:7px;background:rgba(255,255,255,0.72);border:1px solid rgba(229,231,235,0.9);box-shadow:0 1px 3px rgba(0,0,0,0.08)"></div>
    <svg class="abs" style="left:804.4px;top:257px" width="14" height="14" viewBox="0 0 14 14"><path d="M2.3 7 A4.8 4.8 0 1 0 3.7 3.6" fill="none" stroke="#6b7280" stroke-width="1.2"/><path d="M2.3 1.3 V4.4 H5.4" fill="none" stroke="#6b7280" stroke-width="1.2"/></svg>
    <div class="abs" style="left:794.4px;top:286px;width:34px;height:28px;border-radius:7px;background:rgba(255,255,255,0.72);border:1px solid rgba(229,231,235,0.9);box-shadow:0 1px 3px rgba(0,0,0,0.08)"></div>
    <svg class="abs" style="left:804.4px;top:293px" width="14" height="14" viewBox="0 0 14 14"><path d="M1.5 5 V1.5 H5 M1.5 1.5 L5.2 5.2 M12.5 5 V1.5 H9 M12.5 1.5 L8.8 5.2 M1.5 9 V12.5 H5 M1.5 12.5 L5.2 8.8 M12.5 9 V12.5 H9 M12.5 12.5 L8.8 8.8" fill="none" stroke="#6b7280" stroke-width="1.2"/></svg>
    <div class="abs" style="left:794.4px;top:322px;width:34px;height:28px;border-radius:7px;background:rgba(255,255,255,0.72);border:1px solid rgba(229,231,235,0.9);box-shadow:0 1px 3px rgba(0,0,0,0.08)"></div>
    <svg class="abs" style="left:804.4px;top:329px" width="14" height="14" viewBox="0 0 14 14"><path d="M1.5 4.5 V1.5 H4.5 M9.5 1.5 H12.5 V4.5 M12.5 9.5 V12.5 H9.5 M4.5 12.5 H1.5 V9.5" fill="none" stroke="#6b7280" stroke-width="1.2"/></svg>
    <div class="abs" style="left:910px;top:0;width:15px;height:521px;background:#fbfbfb"></div>
    <svg class="abs" style="left:913px;top:5px" width="9" height="7" viewBox="0 0 9 7"><path d="M4.5 0.5 L8.8 6.6 H0.2 Z" fill="#8a8a8a"/></svg>
    <div class="abs" style="left:913px;top:18px;width:9px;height:115px;border-radius:4.5px;background:#8a8a8a"></div>
    <svg class="abs" style="left:913px;top:510px" width="9" height="7" viewBox="0 0 9 7"><path d="M0.2 0.4 H8.8 L4.5 6.6 Z" fill="#8a8a8a"/></svg>

  </div>

  <!-- input area -->
  <div class="abs" style="left:230px;top:700px;width:925px;height:89px;background:#fff;border-top:1px solid #e5e7eb"></div>
  <div class="abs" style="left:252px;top:715px;width:835px;height:60px;border-radius:10px;background:#fff;border:1px solid #e5e7eb"></div>
  <div class="abs" style="left:268px;top:730.9px;font-size:12.3px;line-height:12.3px;color:#6b7280;white-space:nowrap">Type your message... (Enter to send, Shift+Enter for new line)</div>
  <div class="abs" style="left:1097px;top:739px;width:36px;height:36px;border-radius:50%;background:#a5bdfc"></div>
  <svg class="abs" style="left:1107px;top:749px" width="16" height="16" viewBox="0 0 16 16"><path d="M14 2 L2 7 L7 9 L9 14 Z M14 2 L7 9" fill="none" stroke="#fff" stroke-width="1.3" stroke-linejoin="round"/></svg>
</div>

</div>
<script></script>
</body></html>
